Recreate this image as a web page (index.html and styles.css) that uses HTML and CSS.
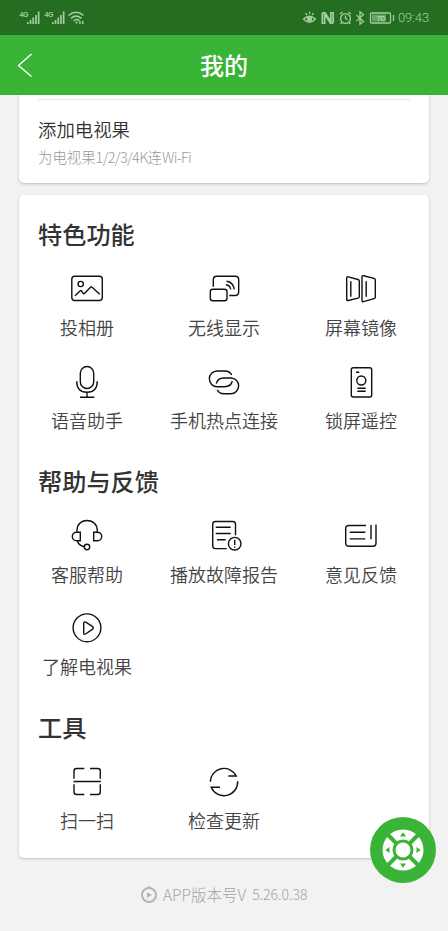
FILE: index.html
```html
<!DOCTYPE html>
<html lang="zh-CN">
<head>
<meta charset="utf-8">
<title>我的</title>
<link rel="stylesheet" href="styles.css">
</head>
<body>
<div class="statusbar">
  <svg class="signals" width="70" height="18" viewBox="0 0 70 18">
    <g class="solid">
      <path d="M8 13h1.700v2H8zM10.700 11h1.700v4h-1.700zM13.400 8.500h1.700v6.500h-1.700zM16.100 6h1.700v9h-1.700zM18.800 2.500h1.700v12.500h-1.700z"/>
      <path d="M33 13h1.700v2H33zM35.700 11h1.700v4h-1.700zM38.400 8.500h1.700v6.500h-1.700zM41.100 6h1.700v9h-1.700zM43.800 2.500h1.700v12.500h-1.700z"/>
      <path d="M56.500 12.500h2v2h-2zM60.200 12h1.500v3h-1.500zM63 12h1.500v3h-1.500z"/>
    </g>
    <path class="wave" d="M49.500 6.500Q57 0 64.500 6.500M52 9.300Q57 5 62.500 9.300M54.500 12Q57.500 9.300 60.500 11.500"/>
    <text x="0.500" y="7.500">4G</text><text x="25.500" y="7.500">4G</text>
  </svg>
  <div class="status-right">
    <svg width="94" height="18" viewBox="0 0 94 18" class="sysicons">
      <path d="M1.500 10Q7.500 4.500 13.500 10Q7.500 16.500 1.500 10zM3.500 4l1.500 2.200M7.500 2.500v2.500M11.500 4L10 6.200"/>
      <circle class="solid" cx="7.500" cy="10" r="2.700"/>
      <path class="solid" d="M19.500 4L21 3H23.500L28 10V3H32V14L30.500 15H28L23.500 8V15H19.500z"/>
      <path class="nfc-gap" d="M21.500 4.500V14M30 4V13.500"/>
      <circle cx="43.500" cy="9.500" r="4.900"/>
      <path d="M43.500 6.500v3l2 1.500M38 5l2.500-2M49 5l-2.500-2M40 13.500l-1.500 1.500M47 13.500l1.500 1.500"/>
      <path d="M54.500 6l7 6.500-3.500 2.700V2.800L61.500 5.500l-7 6.500"/>
      <rect x="68.500" y="4" width="20" height="10" rx="1"/>
      <rect class="charge" x="70" y="5.500" width="14" height="7"/>
      <path d="M91.500 6v6"/>
      <text x="74.500" y="12">70</text>
    </svg>
    <span class="clock">09:43</span>
  </div>
</div>
<header class="navbar">
  <svg class="back" width="16" height="26" viewBox="0 0 16 26"><path d="M14.500 2L1.500 13.500L14.500 24.500"/></svg>
  <h1>我的</h1>
</header>
<main>
  <section class="card device">
    <div class="device-name">添加电视果</div>
    <div class="device-note">为电视果<span class="latin">1/2/3/4K</span>连<span class="latin">Wi-Fi</span></div>
  </section>

  <section class="card menu">
    <div class="group">
      <h2>特色功能</h2>
      <div class="tiles">
        <div class="tile"><svg viewBox="0 0 36 36"><rect x="2.800" y="5.300" width="30.500" height="24.200" rx="3"/><circle cx="11.700" cy="13" r="2.600"/><path d="M6 24.700L11.300 19.700Q12 19.200 12.600 20L14 22.300Q14.700 23.200 15.600 22.300L21.500 16.200Q22.300 15.500 23.100 16.200L30.700 23.300"/></svg><span>投相册</span></div>
        <div class="tile"><svg viewBox="0 0 36 36"><path d="M7.300 15.700V8.800Q7.300 5.300 10.800 5.300H29.200Q32.700 5.300 32.700 8.800V20.800Q32.700 24.500 29.200 24.500H23.300M20.500 10.200Q27 11 28.300 18.300M20 13.800Q24 14.300 24.700 18.300"/><rect x="4.300" y="18.300" width="16.700" height="11.400" rx="2.500"/></svg><span>无线显示</span></div>
        <div class="tile"><svg viewBox="0 0 36 36"><path d="M5.200 5.900L15 8.500Q16.300 8.900 16.300 10.200V25.500Q16.300 26.700 15 27.100L5.200 29.500Q3.700 29.800 3.700 28.400V7Q3.700 5.500 5.200 5.900zM20.500 4.700L31 7.300Q32.300 7.700 32.300 9V26Q32.300 27.300 31 27.600L20.500 30.600Q19 31 19 29.600V5.800Q19 4.300 20.500 4.700zM7.800 10.300V25.700M23.200 10.300V25.700"/></svg><span>屏幕镜像</span></div>
        <div class="tile"><svg viewBox="0 0 36 36"><rect x="11.300" y="2.500" width="13.400" height="22" rx="6.700"/><path d="M7.700 17.300C7.700 24.500 11.500 28.300 18 28.300S28.300 24.500 28.300 17.300M18 28.300V33.300M11 33.300H25.300"/></svg><span>语音助手</span></div>
        <div class="tile"><svg viewBox="0 0 36 36"><path d="M25.700 11Q23.700 7 19 7H11.200A7.850 7.850 0 0 0 11.200 22.700H18.500C22.500 22.700 25.500 20.800 26.300 17M10.300 19.700C11.200 16 13.500 14 17.500 14H24.800A7.850 7.850 0 0 1 24.800 29.700H18Q13 29.700 11.300 25.700"/></svg><span>手机热点连接</span></div>
        <div class="tile"><svg viewBox="0 0 36 36"><rect x="8.300" y="3.700" width="20.400" height="29.300" rx="2"/><circle cx="18.300" cy="16.500" r="4.500"/><path d="M13 8.300H16.300M14.300 24.300H22.700M14.300 27.300H22.700"/></svg><span>锁屏遥控</span></div>
      </div>
    </div>

    <div class="group">
      <h2>帮助与反馈</h2>
      <div class="tiles">
        <div class="tile"><svg viewBox="0 0 36 36"><path d="M8 14V12.500C8 6.500 12 2.500 18 2.500S28.300 6.500 28.300 12.500V14M11.300 14.300V22.700H7.500A4.200 4.200 0 0 1 7.500 14.300zM24.700 14.300V22.700H28.500A4.200 4.200 0 0 0 28.500 14.300zM8.300 22.700Q9.500 27.300 15.300 28.700"/><circle cx="18" cy="29" r="2.700"/></svg><span>客服帮助</span></div>
        <div class="tile"><svg viewBox="0 0 36 36"><path d="M29.500 17.300V6.300Q29.500 3.500 26.700 3.500H9.500Q6.700 3.500 6.700 6.300V27.700Q6.700 30.600 9.500 30.600H20.700M9.700 9.200H24.700M9.700 15.500H24.700M11 21.700H19.700M28.700 21.800V27M28.700 28.500V29.700"/><circle cx="28.700" cy="25.700" r="6.300"/></svg><span>播放故障报告</span></div>
        <div class="tile"><svg viewBox="0 0 36 36"><path d="M23 7.500H6Q2.700 7.500 2.700 10.500V25.300Q2.700 28.300 6 28.300H30Q33 28.300 33 25.300V6.500M28 7V21.300M6.700 14.300H22.300M6.700 20.900H22.300"/></svg><span>意见反馈</span></div>
        <div class="tile"><svg viewBox="0 0 36 36"><circle cx="18" cy="17.800" r="13.900"/><path d="M14.700 13.300Q14.700 11.300 16.800 12.200L23.300 16.400Q25.300 17.800 23.300 19.400L16.500 24Q14.700 25 14.700 23z"/></svg><span>了解电视果</span></div>
      </div>
    </div>

    <div class="group">
      <h2>工具</h2>
      <div class="tiles">
        <div class="tile"><svg viewBox="0 0 36 36"><path d="M5 14.700V7Q5 4.500 7.500 4.500H15.300M21 4.500H28.800Q31.300 4.500 31.300 7V14.700M5 20.300V28Q5 30.500 7.500 30.500H15.300M21 30.500H28.800Q31.300 30.500 31.300 28V20.300M4.500 17.500H31.800"/></svg><span>扫一扫</span></div>
        <div class="tile"><svg viewBox="0 0 36 36"><path d="M4.200 17.700A13.800 13.800 0 0 1 30.300 12H22.300M31.700 17.300A13.800 13.800 0 0 1 5.200 23.300H14"/></svg><span>检查更新</span></div>
      </div>
    </div>
  </section>
</main>
<footer class="version">
  <svg width="18" height="19" viewBox="0 0 18 19"><circle cx="9" cy="10" r="7"/><path d="M7 7.200V12.800L12 10zM7.500 2.500L9 .500L10.500 2.500z"/></svg>
  <span>APP版本号V</span><span class="number">5.26.0.38</span>
</footer>
<div class="remote">
  <svg width="66" height="66" viewBox="0 0 66 66">
    <circle class="white" cx="33" cy="33" r="20.500"/>
    <path class="cross" d="M18 18L48 48M48 18L18 48"/>
    <circle class="hub" cx="33" cy="33" r="9"/>
    <path class="arrows" d="M33 15.300L36 19.500H30zM33 50.700L36 46.500H30zM15.300 33L19.500 30V36zM50.700 33L46.500 30V36z"/>
  </svg>
</div>
</body>
</html>
```
FILE: styles.css
```css
* { box-sizing: border-box; }

body {
  margin: 0;
  height: 931px;
  overflow: hidden;
  background: #f2f2f2;
  color: #333;
  font-family: "Noto Sans CJK SC", sans-serif;
}

svg { display: block; flex: none; }

.statusbar {
  display: flex;
  justify-content: space-between;
  height: 35px;
  padding: 9px 17px 0 19px;
  background: #256d21;
  color: #a3cda0;
}
.statusbar svg { fill: none; stroke: #a3cda0; stroke-width: 1.3; }
.statusbar .solid { fill: #a3cda0; stroke: none; }
.statusbar .wave { stroke-width: 1.6; }
.statusbar text { fill: #a3cda0; stroke: none; font: bold 7px "Liberation Sans", sans-serif; letter-spacing: -0.500px; }
.statusbar .nfc-gap { stroke: #256d21; stroke-width: 0.600; }
.statusbar .charge { fill: #69a366; stroke: none; }
.statusbar .sysicons text { fill: #d0e8ce; font-size: 8px; font-weight: normal; }
.status-right { display: flex; gap: 2px; }
.clock {
  width: 33px;
  font: 300 13px/18px Roboto, sans-serif;
  letter-spacing: -0.100px;
  white-space: nowrap;
}

.navbar {
  display: grid;
  grid-template-columns: 60px 1fr 60px;
  align-items: center;
  height: 60px;
  background: #3ab436;
}
.back { margin-left: 17px; fill: none; stroke: #fff; stroke-width: 1.4; }
.navbar h1 {
  margin: 0;
  color: #fff;
  font-size: 24px;
  font-weight: 500;
  line-height: 36px;
  text-align: center;
}

main { padding: 0 19px; }

.card {
  background: #fff;
  border-radius: 5px;
  box-shadow: 0 1px 3px rgba(0, 0, 0, 0.22);
}

.device {
  height: 88px;
  margin-bottom: 12px;
  padding: 4px 19px 0;
  border-radius: 0 0 5px 5px;
}
.device-name {
  padding-top: 15px;
  border-top: 1px solid #e6e6e6;
  font-size: 18.400px;
  font-weight: 350;
  line-height: 28px;
}
.device-note {
  margin-top: 3px;
  color: #999;
  font-size: 14.400px;
  font-weight: 300;
  line-height: 22px;
}
.device-note .latin { letter-spacing: -0.600px; }

.menu { padding-bottom: 16px; }
.group { padding-bottom: 9px; }
.group h2 {
  margin: 0 19px 21px;
  padding-top: 22px;
  font-size: 24.200px;
  font-weight: 500;
  line-height: 33px;
}
.tiles {
  display: grid;
  grid-template-columns: repeat(3, 137px);
  row-gap: 24.500px;
  margin-left: -0.500px;
  padding-bottom: 1px;
}
.tile {
  display: flex;
  flex-direction: column;
  align-items: center;
  gap: 8px;
  height: 68px;
}
.tile svg {
  width: 36px;
  height: 36px;
  fill: none;
  stroke: #111;
  stroke-width: 1.400;
}
.tile span {
  color: #444;
  font-size: 18px;
  font-weight: 350;
  line-height: 24px;
  white-space: nowrap;
}

.version {
  display: flex;
  align-items: center;
  height: 24px;
  margin-top: 24px;
  padding-left: 140px;
  color: #a4a4a4;
  font-size: 15.500px;
  font-weight: 300;
  white-space: nowrap;
}
.version svg { margin-right: 5px; fill: none; stroke: #b5b5b5; stroke-width: 2; }
.version path { fill: #b5b5b5; stroke: none; }
.version .number { margin-left: 6px; font-size: 14px; }

.remote {
  position: absolute;
  left: 369.500px;
  top: 817px;
  width: 66px;
  height: 66px;
  border-radius: 50%;
  background: #3ab436;
}
.remote .white { fill: #fff; }
.remote .cross { stroke: #3ab436; stroke-width: 4; }
.remote .hub { fill: #fff; stroke: #3ab436; stroke-width: 3; }
.remote .arrows { fill: #3ab436; }
```
